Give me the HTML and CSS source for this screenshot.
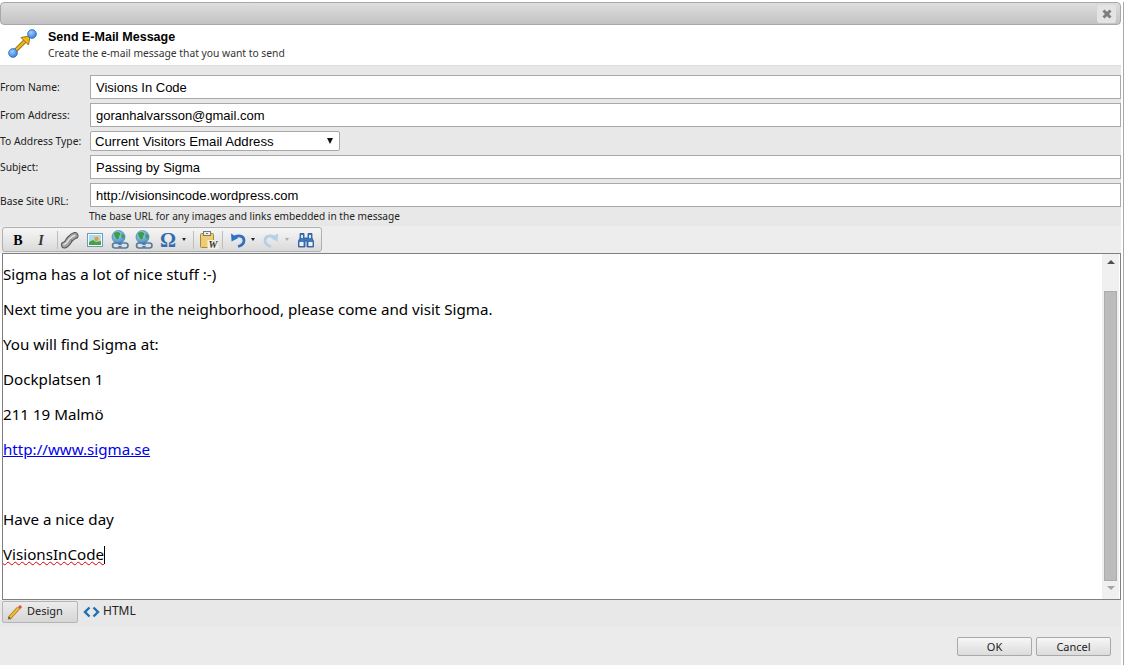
FILE: index.html
```html
<!DOCTYPE html>
<html lang="en">
<head>
<meta charset="utf-8">
<title>Send E-Mail Message</title>
<link rel="stylesheet" href="styles.css">
</head>
<body>
<div class="dialog">
  <div class="titlebar">
    <div class="close">
      <svg width="12" height="12" viewBox="0 0 12 12"><path d="M2.500 2.500l7 7M9.500 2.500l-7 7" stroke="#7d7d7d" stroke-width="3" fill="none"/></svg>
    </div>
  </div>
  <div class="head">
    <svg class="head-icon" width="32" height="32" viewBox="0 0 32 32">
      <defs>
        <radialGradient id="ball" cx="0.4" cy="0.35" r="0.7"><stop offset="0" stop-color="#9fd0fb"/><stop offset="1" stop-color="#2a78dc"/></radialGradient>
      </defs>
      <path d="M9 24L21 12" stroke="#8a6a10" stroke-width="4"/>
      <path d="M9 24L20 13" stroke="#f0b820" stroke-width="2.400"/>
      <path d="M15 10.500l9-1.500-1.500 9z" fill="#f0b820" stroke="#97730f" stroke-width="1"/>
      <circle cx="26" cy="7" r="4.400" fill="url(#ball)" stroke="#2f6fc0" stroke-width="0.800"/>
      <circle cx="7" cy="26" r="4.400" fill="url(#ball)" stroke="#2f6fc0" stroke-width="0.800"/>
    </svg>
    <div class="head-text">
      <div class="head-title">Send E-Mail Message</div>
      <div class="head-sub">Create the e-mail message that you want to send</div>
    </div>
  </div>
  <div class="form">
    <div class="row"><div class="label">From Name:</div><div class="field">Visions In Code</div></div>
    <div class="row"><div class="label">From Address:</div><div class="field">goranhalvarsson@gmail.com</div></div>
    <div class="row row-select"><div class="label">To Address Type:</div><div class="select"><span>Current Visitors Email Address</span><i class="select-arrow"></i></div></div>
    <div class="row"><div class="label">Subject:</div><div class="field">Passing by Sigma</div></div>
    <div class="row row-url"><div class="label label-low">Base Site URL:</div><div class="field">http://visionsincode.wordpress.com</div></div>
    <div class="hint">The base URL for any images and links embedded in the message</div>
  </div>
  <div class="toolbar-wrap">
    <div class="toolbar">
      <button class="tb"><svg width="16" height="16" viewBox="0 0 16 16"><text x="8" y="13" class="g-bold">B</text></svg></button>
      <button class="tb"><svg width="16" height="16" viewBox="0 0 16 16"><text x="6" y="13" class="g-ital">I</text></svg></button>
      <span class="sep sep-a"></span>
      <button class="tb"><svg width="20" height="20" viewBox="0 0 20 20"><path d="M4.500 15c3-.5 3.500-4 5.500-6s3-3 5-3.500" stroke="#555" stroke-width="7" stroke-linecap="round" fill="none"/><path d="M4.500 15c3-.5 3.500-4 5.500-6s3-3 5-3.500" stroke="#a2a2a2" stroke-width="5" stroke-linecap="round" fill="none"/><path d="M4 14.500c2.500-.5 3.500-3.500 5.500-5.500s3-3 5-3.500" stroke="#e4e4e4" stroke-width="1.600" stroke-linecap="round" fill="none"/><path d="M11 9.500c1 1 1 2.500 0 3.500" stroke="#666" stroke-width="1" fill="none"/></svg></button>
      <button class="tb"><svg width="16" height="14" viewBox="0 0 16 14"><rect x="0.500" y="0.500" width="15" height="13" fill="#fff" stroke="#6f9cb4"/><rect x="2" y="2" width="12" height="10" fill="#a8dcf0"/><path d="M2 12V9l4-2 3 2 5-1v4z" fill="#3fa545"/><circle cx="9.500" cy="6" r="2.200" fill="#f09a30"/></svg></button>
      <button class="tb"><svg width="18" height="20" viewBox="0 0 18 20"><use href="#globe-link"/></svg></button>
      <button class="tb"><svg width="18" height="20" viewBox="0 0 18 20"><use href="#globe-link"/></svg></button>
      <button class="tb tb-omega"><span class="omega">Ω</span><i class="drop"></i></button>
      <span class="sep sep-b"></span>
      <button class="tb"><svg width="20" height="20" viewBox="0 0 20 20"><rect x="1.500" y="3.500" width="13" height="14" rx="1" fill="#efcb72" stroke="#a98a3a"/><rect x="4.500" y="1.500" width="7" height="4" fill="#ececec" stroke="#777"/><rect x="7" y="3" width="2" height="1" fill="#777"/><rect x="8.500" y="10" width="11" height="9" fill="#f4f1e2"/><text x="14" y="18" class="g-w">W</text></svg></button>
      <span class="sep sep-c"></span>
      <button class="tb tb-undo"><svg width="16" height="16" viewBox="0 0 16 16"><path d="M4 5.500c4-3 10-1.500 10 3 0 3-2 5-6 6" stroke="#2f72c4" stroke-width="2.800" fill="none"/><path d="M1 1.500l.500 8 7-3.500z" fill="#2f72c4"/></svg><i class="drop"></i></button>
      <button class="tb tb-undo tb-redo"><svg width="16" height="16" viewBox="0 0 16 16"><path d="M12 5.500c-4-3-10-1.500-10 3 0 3 2 5 6 6" stroke="#b5cfe6" stroke-width="2.800" fill="none"/><path d="M15 1.500l-.500 8-7-3.500z" fill="#b5cfe6"/></svg><i class="drop drop-off"></i></button>
      <button class="tb tb-find"><svg width="16" height="16" viewBox="0 0 16 16"><path d="M.500 15V9l1.500-3V1.500h4v4.500h4V1.500h4V6l1.500 3v6h-6.500V9h-2v6z" fill="#3f76c0" stroke="#25548f" stroke-width="0.800"/><rect x="1.500" y="10" width="4" height="4" fill="#eef4fb"/><rect x="10.500" y="10" width="4" height="4" fill="#eef4fb"/><rect x="3" y="3" width="2" height="3" fill="#dbe8f6"/><rect x="11" y="3" width="2" height="3" fill="#dbe8f6"/></svg></button>
    </div>
  </div>
  <svg class="defs" width="0" height="0"><defs>
    <radialGradient id="sea" cx="0.4" cy="0.3" r="0.8"><stop offset="0" stop-color="#a6d6f2"/><stop offset="1" stop-color="#3b86c4"/></radialGradient>
    <g id="globe-link">
      <circle cx="7.500" cy="7" r="6.500" fill="url(#sea)" stroke="#4f86a8" stroke-width="0.700"/>
      <path d="M3 3c2-1.500 5-1.500 6 0s-1 2.500-1 4.500-2 2.500-3 1-2-3-2-5.500zM10.500 4c1.500 0 3 1.500 3 3.500-1 1-2.500 1-3-.500z" fill="#3f9e45"/>
      <rect x="1.500" y="13" width="8.500" height="5" rx="2.500" fill="none" stroke="#55789c" stroke-width="1.600"/>
      <rect x="8" y="13" width="9" height="5" rx="2.500" fill="none" stroke="#55789c" stroke-width="1.600"/>
      <path d="M4 15.500h10" stroke="#cfdbe6" stroke-width="1"/>
    </g>
  </defs></svg>
  <div class="editor">
    <div class="content">
      <p>Sigma has a lot of nice stuff :-)</p>
      <p>Next time you are in the neighborhood, please come and visit Sigma.</p>
      <p>You will find Sigma at:</p>
      <p>Dockplatsen 1</p>
      <p>211 19 Malmö</p>
      <p><a href="#" class="link">http://www.sigma.se</a></p>
      <p>&nbsp;</p>
      <p>Have a nice day</p>
      <p><span class="spell">VisionsInCode</span><i class="caret"></i></p>
    </div>
    <div class="scrollbar">
      <i class="arrow-up"></i>
      <div class="thumb"></div>
      <i class="arrow-down"></i>
    </div>
  </div>
  <div class="tabs">
    <div class="tab tab-on">
      <svg width="16" height="16" viewBox="0 0 16 16"><path d="M2 14.500L11.500 4" stroke="#a77a1d" stroke-width="3.600"/><path d="M2.500 14L11.500 4" stroke="#f4bd3c" stroke-width="2"/><path d="M11 3l2-2 2 2-2 2.500z" fill="#d9503c"/><path d="M1 15.500l.800-3 2.200 2z" fill="#6b5320"/></svg>
      <span>Design</span>
    </div>
    <div class="tab tab-html">
      <svg width="17" height="12" viewBox="0 0 17 12"><path d="M6.500 1.500L2 6l4.500 4.500M10.500 1.500L15 6l-4.500 4.500" stroke="#1f6fb4" stroke-width="2.400" fill="none"/></svg>
      <span>HTML</span>
    </div>
  </div>
  <div class="footer">
    <button class="btn">OK</button>
    <button class="btn">Cancel</button>
  </div>
</div>
</body>
</html>
```
FILE: styles.css
```css
html, body {
  margin: 0;
  padding: 0;
  height: 665px;
  overflow: hidden;
  background: #fff;
}
body {
  font-family: "Noto Sans", "DejaVu Sans", sans-serif;
  color: #000;
  padding-top: 2px;
  box-sizing: border-box;
}
.dialog {
  width: 1121px;
  height: 663px;
  display: flex;
  flex-direction: column;
  box-shadow: 2px 0 0 #fff, 3px 0 0 #a9a9a9, 4px 0 0 #a9a9a9;
}
.titlebar {
  height: 23px;
  flex: none;
  box-sizing: border-box;
  border: 1px solid #a8a8a8;
  border-radius: 4px;
  background: linear-gradient(#dedede, #c2c2c2);
  display: flex;
  justify-content: flex-end;
  align-items: center;
  padding-right: 4px;
}
.close {
  width: 19px;
  height: 18px;
  background: #e4e4e4;
  border-radius: 3px;
  display: flex;
  align-items: center;
  justify-content: center;
}
.head {
  height: 40px;
  flex: none;
  display: flex;
  background: #fff;
  border-bottom: 1px solid #dcdcdc;
}
.head-icon { margin: 2px 10px 0 6px; }
.head-text { padding-top: 5px; }
.head-title {
  font-size: 12.500px;
  font-weight: 700;
  line-height: 15px;
  font-family: "Liberation Sans", sans-serif;
}
.head-sub {
  font-size: 10.300px;
  line-height: 17px;
  color: #333;
}
.form {
  background: #e8e8e8;
  padding-top: 9px;
  height: 151px;
  flex: none;
  display: flex;
  flex-direction: column;
}
.row {
  display: flex;
  height: 24px;
  margin-bottom: 4px;
  align-items: center;
}
.row-select { height: 20px; }
.row-url { margin-bottom: 0; }
.label {
  width: 90px;
  flex: none;
  font-size: 10.300px;
  color: #222;
  white-space: nowrap;
}
.label-low { padding-top: 12px; }
.field {
  flex: 1;
  height: 24px;
  line-height: 24px;
  box-sizing: border-box;
  border: 1px solid #a9a9a9;
  background: #fff;
  font-family: "Liberation Sans", sans-serif;
  font-size: 13px;
  padding-left: 5px;
}
.select {
  width: 250px;
  height: 20px;
  box-sizing: border-box;
  border: 1px solid #a9a9a9;
  border-radius: 2px;
  background: #fff;
  font-family: "Liberation Sans", sans-serif;
  font-size: 13.200px;
  padding-left: 4px;
  display: flex;
  justify-content: space-between;
  align-items: center;
}
.select-arrow {
  width: 0;
  height: 0;
  border-left: 3.500px solid transparent;
  border-right: 3.500px solid transparent;
  border-top: 6px solid #111;
  margin-right: 6px;
}
.hint {
  font-size: 10.100px;
  line-height: 14px;
  margin: 2px 0 0 89px;
  color: #222;
}
.toolbar-wrap {
  background: #ededed;
  height: 27px;
  flex: none;
  padding: 1px 0 0 2px;
  box-sizing: border-box;
}
.toolbar {
  width: 320px;
  height: 25px;
  box-sizing: border-box;
  border: 1px solid #b0b0b0;
  border-radius: 3px;
  background: linear-gradient(#f6f6f6, #dadada);
  display: flex;
  align-items: center;
  padding-left: 3px;
}
.tb {
  border: 0;
  background: none;
  padding: 0;
  width: 24.600px;
  height: 22px;
  display: flex;
  align-items: center;
  justify-content: center;
  flex: none;
}
.tb-omega { width: 33px; gap: 6px; }
.tb-undo {
  width: 34px;
  justify-content: flex-start;
  padding-left: 7px;
  gap: 5px;
}
.tb-redo { padding-left: 6px; gap: 6px; }
.tb-find { margin-left: 3px; }
.omega {
  font-family: "Liberation Serif", serif;
  font-size: 20px;
  font-weight: 700;
  color: #2f6cad;
  line-height: 20px;
}
.drop {
  width: 0;
  height: 0;
  border-left: 2.500px solid transparent;
  border-right: 2.500px solid transparent;
  border-top: 3px solid #222;
}
.drop-off { border-top-color: #aaa; }
.sep {
  width: 1px;
  height: 18px;
  background: #bdbdbd;
  flex: none;
}
.sep-a { margin-left: 2px; }
.sep-b { margin: 0 3px; }
.sep-c { margin-left: 1px; }
.g-bold {
  font: 700 14px "Liberation Serif", serif;
  text-anchor: middle;
}
.g-ital {
  font: italic 700 14px "Liberation Serif", serif;
  text-anchor: middle;
  fill: #333;
}
.g-w {
  font: italic 700 10px "Liberation Serif", serif;
  text-anchor: middle;
  fill: #333;
}
.defs { position: absolute; }
.editor {
  margin-left: 2px;
  width: 1119px;
  height: 347px;
  flex: none;
  box-sizing: border-box;
  border: 1px solid #7f7f7f;
  background: #fff;
  display: flex;
}
.content {
  flex: 1;
  padding: 11px 0 0;
  font-size: 15.150px;
  line-height: 19px;
}
.content p { margin: 0 0 16px; white-space: nowrap; }
.link { color: #0000ee; }
.spell { text-decoration: underline wavy #e00000 1px; }
.caret {
  display: inline-block;
  width: 1px;
  height: 18px;
  background: #000;
  vertical-align: -4px;
}
.scrollbar {
  width: 17px;
  margin-right: 1px;
  background: #f0f0f0;
  display: flex;
  flex-direction: column;
  align-items: center;
}
.arrow-up, .arrow-down {
  width: 0;
  height: 0;
  flex: none;
  border-left: 4px solid transparent;
  border-right: 4px solid transparent;
}
.arrow-up { border-bottom: 4px solid #505050; margin-top: 6px; }
.arrow-down { border-top: 4px solid #a6a6a6; margin-top: 5px; }
.thumb {
  margin-top: 27px;
  width: 13px;
  height: 290px;
  background: #bcbcbc;
  border: 1px solid #acacac;
  flex: none;
  box-sizing: border-box;
}
.tabs {
  height: 26px;
  flex: none;
  background: #e8e8e8;
  display: flex;
  align-items: flex-start;
  padding: 1px 0 0 2px;
  box-sizing: border-box;
  gap: 5px;
}
.tab {
  height: 22px;
  display: flex;
  align-items: center;
  gap: 3px;
  font-size: 11px;
  line-height: 18px;
  color: #222;
}
.tab span { padding-bottom: 2px; }
.tab-html { font-size: 12px; }
.tab-on {
  width: 76px;
  box-sizing: border-box;
  padding-left: 4px;
  gap: 4px;
  border: 1px solid #b4b4b4;
  border-radius: 2px;
  background: linear-gradient(#ececec, #d6d6d6);
}
.footer {
  flex: 1;
  background: #ebebeb;
  display: flex;
  justify-content: flex-end;
  gap: 4px;
  padding: 11px 10px 0 0;
  box-sizing: border-box;
}
.btn {
  width: 75px;
  height: 19px;
  padding: 0;
  border: 1px solid #a9a9a9;
  border-radius: 2px;
  background: linear-gradient(#f6f6f6, #dcdcdc);
  font: 11px "Noto Sans", sans-serif;
  color: #222;
}
```
